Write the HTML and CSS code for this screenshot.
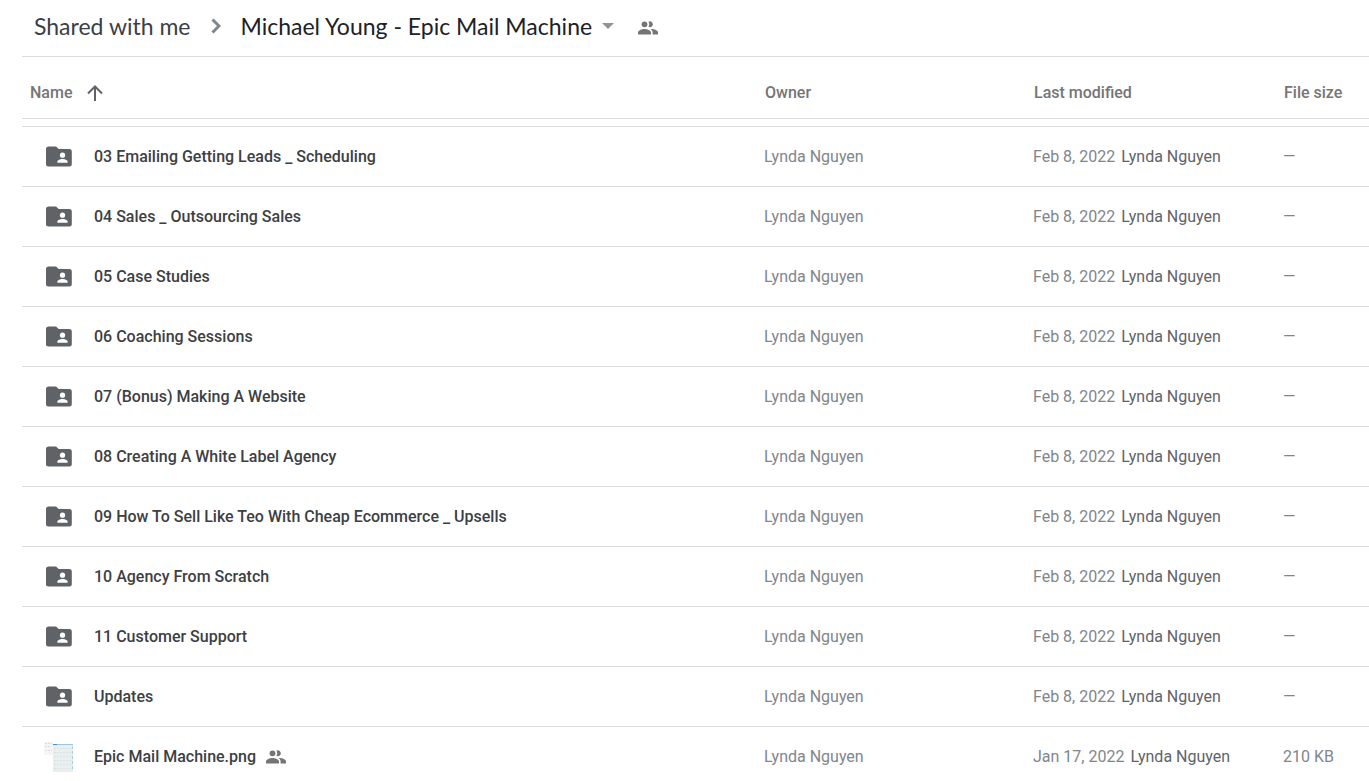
FILE: index.html
```html
<!DOCTYPE html>
<html lang="en">
<head>
<meta charset="utf-8">
<title>Michael Young - Epic Mail Machine</title>
<link rel="stylesheet" href="styles.css">
</head>

<body>
<svg class="defs" aria-hidden="true">
	<symbol id="folder" viewBox="0 0 26 21">
		<path fill="#5f6368" d="M2.5 0.5h7.6l2.6 2.4h10.6a2.5 2.5 0 0 1 2.5 2.5v12.7a2.5 2.5 0 0 1-2.5 2.5H2.5a2.5 2.5 0 0 1-2.5-2.5V3a2.5 2.5 0 0 1 2.5-2.5z"/>
		<circle fill="#fff" cx="16.5" cy="9.2" r="2.6"/>
		<path fill="#fff" d="M11.400 16.800v-1.300c0-1.700 3.400-2.600 5.100-2.600s5.100 0.900 5.100 2.600v1.300z"/>
	</symbol>
	<symbol id="people" viewBox="0 0 20 14">
		<circle cx="6.500" cy="3.300" r="2.900"/>
		<path d="M10.400 5.800a2.900 2.900 0 1 0 0-5c1.100 1.500 1.100 3.500 0 5z"/>
		<path d="M0 13.500v-2c0-2.300 4-3.500 6.500-3.500s6.500 1.200 6.500 3.500v2z"/>
		<path d="M12.500 8.100c1.400 0.900 2.100 2 2.100 3.400v2H20v-2c0-2.100-4.300-3.700-7.500-3.400z"/>
	</symbol>
</svg>

<nav class="crumbs">
	<a class="parent" href="#">Shared with me</a>
	<svg class="chevron" viewBox="0 0 10 16"><path d="M1.500 1.500L8 8l-6.500 6.500"/></svg>
	<button class="current" type="button">Michael Young - Epic Mail Machine<svg class="caret" viewBox="0 0 12 6"><path d="M0 0h12L6 6z"/></svg></button>
	<button class="share" type="button" aria-label="Manage access"><svg class="people"><use href="#people"/></svg></button>
</nav>

<table class="files">
	<thead>
		<tr>
			<th class="name"><button type="button">Name<svg class="arrow" viewBox="0 0 16 16"><path d="M8 16V2M1 8.500L8 1.500l7 7"/></svg></button></th>
			<th class="owner">Owner</th>
			<th class="modified">Last modified</th>
			<th class="size">File size</th>
		</tr>
	</thead>
	<tbody>
		<tr class="gap"><td colspan="4"></td></tr>
		<tr>
			<td class="name"><div><svg class="folder"><use href="#folder"/></svg>03 Emailing Getting Leads _ Scheduling</div></td>
			<td>Lynda Nguyen</td>
			<td>Feb 8, 2022 <span class="by">Lynda Nguyen</span></td>
			<td>—</td>
		</tr>
		<tr>
			<td class="name"><div><svg class="folder"><use href="#folder"/></svg>04 Sales _ Outsourcing Sales</div></td>
			<td>Lynda Nguyen</td>
			<td>Feb 8, 2022 <span class="by">Lynda Nguyen</span></td>
			<td>—</td>
		</tr>
		<tr>
			<td class="name"><div><svg class="folder"><use href="#folder"/></svg>05 Case Studies</div></td>
			<td>Lynda Nguyen</td>
			<td>Feb 8, 2022 <span class="by">Lynda Nguyen</span></td>
			<td>—</td>
		</tr>
		<tr>
			<td class="name"><div><svg class="folder"><use href="#folder"/></svg>06 Coaching Sessions</div></td>
			<td>Lynda Nguyen</td>
			<td>Feb 8, 2022 <span class="by">Lynda Nguyen</span></td>
			<td>—</td>
		</tr>
		<tr>
			<td class="name"><div><svg class="folder"><use href="#folder"/></svg>07 (Bonus) Making A Website</div></td>
			<td>Lynda Nguyen</td>
			<td>Feb 8, 2022 <span class="by">Lynda Nguyen</span></td>
			<td>—</td>
		</tr>
		<tr>
			<td class="name"><div><svg class="folder"><use href="#folder"/></svg>08 Creating A White Label Agency</div></td>
			<td>Lynda Nguyen</td>
			<td>Feb 8, 2022 <span class="by">Lynda Nguyen</span></td>
			<td>—</td>
		</tr>
		<tr>
			<td class="name"><div><svg class="folder"><use href="#folder"/></svg>09 How To Sell Like Teo With Cheap Ecommerce _ Upsells</div></td>
			<td>Lynda Nguyen</td>
			<td>Feb 8, 2022 <span class="by">Lynda Nguyen</span></td>
			<td>—</td>
		</tr>
		<tr>
			<td class="name"><div><svg class="folder"><use href="#folder"/></svg>10 Agency From Scratch</div></td>
			<td>Lynda Nguyen</td>
			<td>Feb 8, 2022 <span class="by">Lynda Nguyen</span></td>
			<td>—</td>
		</tr>
		<tr>
			<td class="name"><div><svg class="folder"><use href="#folder"/></svg>11 Customer Support</div></td>
			<td>Lynda Nguyen</td>
			<td>Feb 8, 2022 <span class="by">Lynda Nguyen</span></td>
			<td>—</td>
		</tr>
		<tr>
			<td class="name"><div><svg class="folder"><use href="#folder"/></svg>Updates</div></td>
			<td>Lynda Nguyen</td>
			<td>Feb 8, 2022 <span class="by">Lynda Nguyen</span></td>
			<td>—</td>
		</tr>
		<tr class="last">
			<td class="name"><div>
				<svg class="thumb" viewBox="0 0 30 30">
					<path fill="#f5f5f6" d="M0 0h9v13H0z"/>
					<path stroke="#dcdde0" stroke-dasharray="2 1" d="M1 1.500h7M1 4.500h6M1 8.500h7"/>
					<path fill="#e9eeef" d="M9 2h20v28H9z"/>
					<path fill="#3d8fd0" d="M9 2h4v1H9z"/>
					<path fill="#9cc3e0" d="M13 2h16v1H13z"/>
					<path stroke="#dbe3e6" stroke-dasharray="2 1" d="M10 6.500h18M10 10.500h18M10 14.500h18M10 18.500h18M10 22.500h18M10 26.500h18"/>
					<path stroke="#a5d3cf" stroke-dasharray="3 2" d="M28.500 4v25"/>
				</svg>
				Epic Mail Machine.png
				<svg class="people"><use href="#people"/></svg>
			</div></td>
			<td>Lynda Nguyen</td>
			<td>Jan 17, 2022 <span class="by">Lynda Nguyen</span></td>
			<td>210 KB</td>
		</tr>
	</tbody>
</table>
</body>
</html>
```
FILE: styles.css
```css
* {padding:0;margin:0;box-sizing:border-box;}
body {padding-left:22px;background:#fff;color:#757575;font:16px/20px Roboto,sans-serif;}
button {border:0;background:none;font:inherit;color:inherit;cursor:pointer;}
svg {flex:none;}
.defs {display:none;}

/* breadcrumb */
.crumbs {display:flex;align-items:center;height:57px;padding:0 0 4px 12px;border-bottom:1px solid #dadce0;font:23px/28px Lato,sans-serif;color:#202124;white-space:nowrap;}
.parent {color:#3c4043;text-decoration:none;}
.chevron {width:10px;height:16px;margin:0 20px;fill:none;stroke:#80868b;stroke-width:3;}
.caret {width:12px;height:6px;margin-left:10px;fill:#909399;}
.current,.share {display:flex;align-items:center;}
.share {margin-left:24px;padding-top:4px;}
.people {width:20px;height:14px;fill:#757575;}

/* file list */
.files {width:100%;border-collapse:separate;border-spacing:0;table-layout:fixed;white-space:nowrap;}
th {height:62px;padding:10px 0 0 2px;border-bottom:1px solid #dadce0;text-align:left;font-weight:500;}
th.name {padding-left:8px;}
th button {display:flex;align-items:center;}
.owner {width:269px;}
.modified {width:250px;}
.size {width:87px;}
.arrow {width:16px;height:16px;margin-left:15px;fill:none;stroke:#5f6368;stroke-width:2;}
td {height:60px;padding-left:1px;border-bottom:1px solid #dadce0;color:#80868b;}
.gap td {height:8px;}
.last td {border-bottom:0;}
td.name {padding-left:24px;color:#3c4043;font-weight:500;}
td.name div {display:flex;align-items:center;}
.folder {width:26px;height:21px;margin-right:22px;}
.thumb {width:30px;height:30px;margin:0 20px 0 -2px;}
.name .people {margin-left:10px;}
.by {margin-left:2px;color:#5f6368;}
```
